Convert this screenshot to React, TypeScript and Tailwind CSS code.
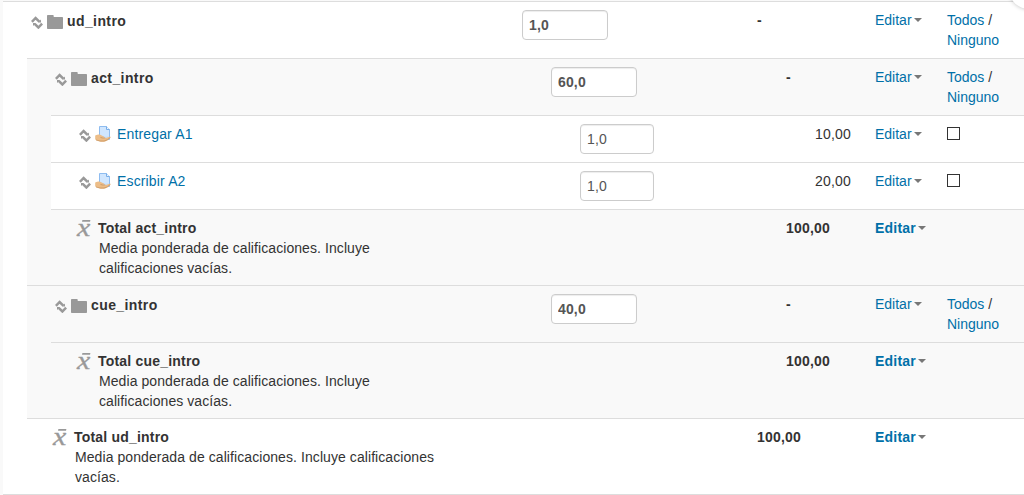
import React from "react";

type Kind = "category" | "item" | "total";

interface Row {
  kind: Kind;
  name: string;
  description?: string[];
  weight?: string;
  grade: string;
  depth: 0 | 1 | 2;
}

const DETAIL = "Media ponderada de calificaciones. Incluye";

const rows: Row[] = [
  { kind: "category", depth: 0, name: "ud_intro", weight: "1,0", grade: "-" },
  { kind: "category", depth: 1, name: "act_intro", weight: "60,0", grade: "-" },
  { kind: "item", depth: 2, name: "Entregar A1", weight: "1,0", grade: "10,00" },
  { kind: "item", depth: 2, name: "Escribir A2", weight: "1,0", grade: "20,00" },
  { kind: "total", depth: 1, name: "Total act_intro", description: [DETAIL, "calificaciones vacías."], grade: "100,00" },
  { kind: "category", depth: 1, name: "cue_intro", weight: "40,0", grade: "-" },
  { kind: "total", depth: 1, name: "Total cue_intro", description: [DETAIL, "calificaciones vacías."], grade: "100,00" },
  { kind: "total", depth: 0, name: "Total ud_intro", description: [`${DETAIL} calificaciones`, "vacías."], grade: "100,00" },
];

const gridByDepth = {
  0: "grid-cols-[522px_235px_118px_72px_1fr]",
  1: "grid-cols-[551px_235px_89px_72px_1fr]",
  2: "grid-cols-[580px_235px_60px_72px_1fr]",
};

const indentByDepth = { 0: "pl-[31px]", 1: "pl-[55px]", 2: "pl-[79px]" };
const totalIndent = { 0: "pl-[52px]", 1: "pl-[76px]", 2: "pl-[100px]" };
const heightByKind = { category: "h-[57px]", item: "h-[47px]", total: "h-[76px]" };

function MoveIcon() {
  return (
    <svg className="mt-[5px] h-[13px] w-3 shrink-0" viewBox="0 0 12 13" fill="none" stroke="#999" strokeWidth="2.5">
      <path d="M.9 5.8 4.6 2 8.3 5.7" />
      <path d="M11.1 7.7 7.4 11.5 3.7 7.8" />
      <path d="M7 6.4h3V3.4zM5 7.1H2v3z" fill="#999" stroke="none" />
    </svg>
  );
}

function FolderIcon() {
  return (
    <svg className="mt-1 ml-1 h-[14px] w-4 shrink-0" viewBox="0 0 16 14" fill="#999">
      <path d="M0 .8Q0 0 .8 0h5.1q.8 0 .8.8V2h8.5q.8 0 .8.8v10.4q0 .8-.8.8H.8q-.8 0-.8-.8z" />
    </svg>
  );
}

function AssignmentIcon() {
  return (
    <svg className="mt-[2px] ml-1 h-4 w-4 shrink-0" viewBox="0 0 16 16">
      <path d="M4.5.5h7l3 3v10h-10z" fill="#c8e1fc" stroke="#8ebcf0" />
      <path d="M5 1h6v3h3v6L5 11z" fill="#d0e6fe" />
      <path d="M11.5.5v3h3" fill="#edf6ff" stroke="#78aee8" />
      <path d="M.2 9.6Q3 8 5.3 8.7l2.5 1.3q1.7.3 1.6 1.2l-2.2.6 3.4.1 4.2-1.1q1.2-.1.7.7-2.6 3.2-5.2 3.9-3.1.7-6.1-.2L.2 13.5z" fill="#ecbd88" />
      <path d="M1 14q4 1.5 8 1 3.8-.7 6.2-3.5M5.5 11.5q2.3.9 4.8.3" fill="none" stroke="#ca965f" strokeWidth=".8" />
    </svg>
  );
}

function MeanIcon() {
  return (
    <svg className="mt-[1px] h-[18px] w-[15px] shrink-0 overflow-visible" viewBox="0 0 15 18" fill="#999">
      <path d="M6.4 1H14.4L14 2.8H6z" />
      <text
        transform="translate(1 17) scale(1.2 1)"
        fontSize="25"
        stroke="#999"
        strokeWidth=".3"
        className="font-['Liberation_Serif',serif] font-normal italic"
      >
        x
      </text>
    </svg>
  );
}

function NameCell({ row }: { row: Row }) {
  if (row.kind === "total") {
    return (
      <div className={`flex items-start ${totalIndent[row.depth]}`}>
        <MeanIcon />
        <div className="ml-[7px]">
          <div className="font-bold tracking-[0.2px]">{row.name}</div>
          <div className="pl-px tracking-[0.075px]">
            {row.description?.map((line) => <div key={line} className="whitespace-nowrap">{line}</div>)}
          </div>
        </div>
      </div>
    );
  }
  const category = row.kind === "category";
  return (
    <div className={`flex items-start ${indentByDepth[row.depth]}`}>
      <div className={category ? "flex pt-px" : "flex"}>
        <MoveIcon />
        {category ? <FolderIcon /> : <AssignmentIcon />}
        {category ? (
          <strong className="ml-1 tracking-[0.4px]">{row.name}</strong>
        ) : (
          <a className="ml-[6px] tracking-[0.15px] text-[#0070a8]">{row.name}</a>
        )}
      </div>
    </div>
  );
}

function GradeRow({ row, index }: { row: Row; index: number }) {
  const nested = index > 0 && index < 7;
  const topLevel = index === 0;
  const outerLine = index === 1 || index === 5 || index === 7;
  return (
    <div className={`flex ${heightByKind[row.kind]} bg-[#f9f9f9]`}>
      <div className="w-[3px] shrink-0" />
      {!topLevel && <div className="w-6 shrink-0 bg-white" />}
      {!topLevel && !outerLine && <div className="w-6 shrink-0" />}
      <div className={`min-w-0 flex-1 border-t border-[#ddd] ${nested && row.kind !== "item" ? "bg-[#f9f9f9]" : "bg-white"}`}>
        <div className={`grid w-[1024px] pt-2 ${gridByDepth[row.depth]} ${topLevel ? "-ml-[3px]" : outerLine ? "-ml-[27px]" : "-ml-[51px]"}`}>
          <NameCell row={row} />
          <div>
            {row.weight && (
              <input
                readOnly
                value={row.weight}
                aria-label={`Peso de ${row.name}`}
                className={`block h-[30px] rounded border border-[#ccc] bg-white px-[6px] tracking-[0.15px] text-[#555] shadow-[inset_0_1px_1px_rgba(0,0,0,0.075)] outline-none ${row.kind === "item" ? "w-[74px]" : "w-[86px] font-bold"}`}
              />
            )}
          </div>
          <div className={row.kind === "item" ? "tracking-[0.2px]" : "font-bold tracking-[0.2px]"}>{row.grade}</div>
          <div className="text-[#0070a8]">
            <a className={`inline-flex ${row.kind === "total" ? "font-bold tracking-[0.2px]" : ""}`}>
              Editar
              <svg className="mt-2 ml-[2px] h-1 w-2" viewBox="0 0 8 4" fill="#777"><path d="M0 0h8L4 4z" /></svg>
            </a>
          </div>
          <div>
            {row.kind === "category" && <><a className="text-[#0070a8]">Todos</a> /<br /><a className="text-[#0070a8]">Ninguno</a></>}
            {row.kind === "item" && <input type="checkbox" aria-label={row.name} className="mt-[3px] block h-[13px] w-[13px] appearance-none border border-[#333] bg-white" />}
          </div>
        </div>
      </div>
    </div>
  );
}

export default function App() {
  return (
    <main className="relative h-[495px] w-full overflow-hidden bg-[#f9f9f9] pt-px font-['Liberation_Sans',Arial,sans-serif] text-[14px] leading-5 text-[#333]">
      {rows.map((row, index) => <GradeRow key={row.name} row={row} index={index} />)}
      <div className="ml-[3px] h-px bg-[#ddd]" />
      <div className="absolute -top-[31px] left-[1009px] h-10 w-10 rounded-full bg-white shadow-[0_0_4px_rgba(0,0,0,0.25)]" />
    </main>
  );
}
